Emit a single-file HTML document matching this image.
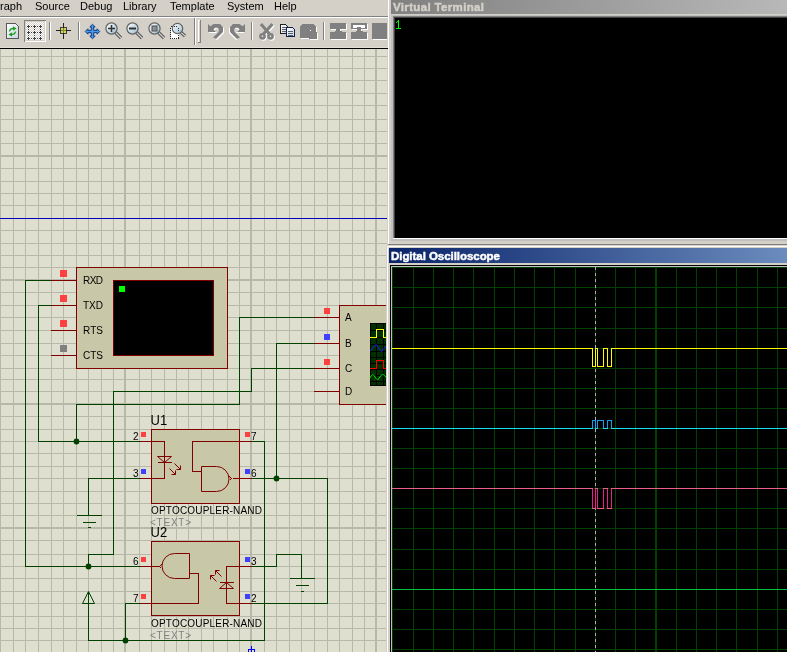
<!DOCTYPE html>
<html><head><meta charset="utf-8"><style>
html,body{margin:0;padding:0;width:787px;height:652px;overflow:hidden;background:#d4d0c8;position:relative;font-family:"Liberation Sans",sans-serif;}
.a{position:absolute;}
.menu{position:absolute;top:0;left:0;width:388px;height:16px;font-size:11px;color:#000;}
.menu span{position:absolute;top:0px;}
svg text{font-family:"Liberation Sans",sans-serif;}
svg{will-change:transform;}
.menu{will-change:transform;}
</style></head><body>
<div class="menu">
<span style="left:0px">raph</span><span style="left:35px">Source</span><span style="left:80px">Debug</span><span style="left:123px">Library</span><span style="left:170px">Template</span><span style="left:227px">System</span><span style="left:274px">Help</span>
</div>
<svg class="a" style="left:0;top:0" width="388" height="652" shape-rendering="crispEdges">
<defs><linearGradient id="lens" x1="0" y1="0" x2="1" y2="1"><stop offset="0" stop-color="#ffffff"/><stop offset="0.7" stop-color="#b8d0e0"/><stop offset="1" stop-color="#90a8b8"/></linearGradient><linearGradient id="doc" x1="0" y1="0" x2="1" y2="1"><stop offset="0" stop-color="#ffffff"/><stop offset="1" stop-color="#c8d4e0"/></linearGradient></defs>
<rect x="0" y="16" width="388" height="1" fill="#808080"/><rect x="0" y="17" width="388" height="1" fill="#ffffff"/><rect x="0" y="47" width="388" height="1" fill="#e2ded8"/><rect x="0" y="48" width="388" height="1" fill="#000000"/>
<rect x="49" y="22" width="1" height="18" fill="#808080"/><rect x="50" y="22" width="1" height="18" fill="#ffffff"/>
<rect x="78" y="22" width="1" height="18" fill="#808080"/><rect x="79" y="22" width="1" height="18" fill="#ffffff"/>
<rect x="194" y="18" width="1" height="27" fill="#808080"/><rect x="195" y="18" width="1" height="27" fill="#ffffff"/>
<rect x="251" y="22" width="1" height="18" fill="#808080"/><rect x="252" y="22" width="1" height="18" fill="#ffffff"/>
<rect x="323" y="22" width="1" height="18" fill="#808080"/><rect x="324" y="22" width="1" height="18" fill="#ffffff"/>
<rect x="198" y="20" width="1" height="23" fill="#ffffff"/><rect x="198" y="20" width="3" height="1" fill="#ffffff"/><rect x="200" y="20" width="1" height="23" fill="#808080"/><rect x="198" y="42" width="3" height="1" fill="#808080"/>
<path d="M6.5,23.5 H15.5 L18.5,26.5 V38.5 H6.5 Z" fill="url(#doc)" stroke="#585858"/><rect x="16" y="25" width="1" height="1" fill="#ffffff"/>
<g shape-rendering="auto"><path d="M9.5,31.5 Q10,28.5 13,28.5" fill="none" stroke="#20a020" stroke-width="1.4"/><polygon points="13,26.3 16.5,28.5 13,30.7" fill="#20a020"/>
<path d="M15.5,31.5 Q15,34.5 12,34.5" fill="none" stroke="#20a020" stroke-width="1.4"/><polygon points="12,32.3 8.5,34.5 12,36.7" fill="#20a020"/></g>
<rect x="24" y="20" width="22" height="22" fill="#ffffff"/><rect x="25" y="21" width="20" height="20" fill="#d4d0c8"/>
<rect x="24" y="20" width="22" height="1" fill="#808080"/><rect x="24" y="20" width="1" height="22" fill="#808080"/>
<rect x="26" y="22" width="1" height="1" fill="#ffffff"/><rect x="28" y="22" width="1" height="1" fill="#ffffff"/><rect x="30" y="22" width="1" height="1" fill="#ffffff"/><rect x="32" y="22" width="1" height="1" fill="#ffffff"/><rect x="34" y="22" width="1" height="1" fill="#ffffff"/><rect x="36" y="22" width="1" height="1" fill="#ffffff"/><rect x="38" y="22" width="1" height="1" fill="#ffffff"/><rect x="40" y="22" width="1" height="1" fill="#ffffff"/><rect x="42" y="22" width="1" height="1" fill="#ffffff"/><rect x="27" y="23" width="1" height="1" fill="#ffffff"/><rect x="29" y="23" width="1" height="1" fill="#ffffff"/><rect x="31" y="23" width="1" height="1" fill="#ffffff"/><rect x="33" y="23" width="1" height="1" fill="#ffffff"/><rect x="35" y="23" width="1" height="1" fill="#ffffff"/><rect x="37" y="23" width="1" height="1" fill="#ffffff"/><rect x="39" y="23" width="1" height="1" fill="#ffffff"/><rect x="41" y="23" width="1" height="1" fill="#ffffff"/><rect x="43" y="23" width="1" height="1" fill="#ffffff"/><rect x="26" y="24" width="1" height="1" fill="#ffffff"/><rect x="28" y="24" width="1" height="1" fill="#ffffff"/><rect x="30" y="24" width="1" height="1" fill="#ffffff"/><rect x="32" y="24" width="1" height="1" fill="#ffffff"/><rect x="34" y="24" width="1" height="1" fill="#ffffff"/><rect x="36" y="24" width="1" height="1" fill="#ffffff"/><rect x="38" y="24" width="1" height="1" fill="#ffffff"/><rect x="40" y="24" width="1" height="1" fill="#ffffff"/><rect x="42" y="24" width="1" height="1" fill="#ffffff"/><rect x="27" y="25" width="1" height="1" fill="#ffffff"/><rect x="29" y="25" width="1" height="1" fill="#ffffff"/><rect x="31" y="25" width="1" height="1" fill="#ffffff"/><rect x="33" y="25" width="1" height="1" fill="#ffffff"/><rect x="35" y="25" width="1" height="1" fill="#ffffff"/><rect x="37" y="25" width="1" height="1" fill="#ffffff"/><rect x="39" y="25" width="1" height="1" fill="#ffffff"/><rect x="41" y="25" width="1" height="1" fill="#ffffff"/><rect x="43" y="25" width="1" height="1" fill="#ffffff"/><rect x="26" y="26" width="1" height="1" fill="#ffffff"/><rect x="28" y="26" width="1" height="1" fill="#ffffff"/><rect x="30" y="26" width="1" height="1" fill="#ffffff"/><rect x="32" y="26" width="1" height="1" fill="#ffffff"/><rect x="34" y="26" width="1" height="1" fill="#ffffff"/><rect x="36" y="26" width="1" height="1" fill="#ffffff"/><rect x="38" y="26" width="1" height="1" fill="#ffffff"/><rect x="40" y="26" width="1" height="1" fill="#ffffff"/><rect x="42" y="26" width="1" height="1" fill="#ffffff"/><rect x="27" y="27" width="1" height="1" fill="#ffffff"/><rect x="29" y="27" width="1" height="1" fill="#ffffff"/><rect x="31" y="27" width="1" height="1" fill="#ffffff"/><rect x="33" y="27" width="1" height="1" fill="#ffffff"/><rect x="35" y="27" width="1" height="1" fill="#ffffff"/><rect x="37" y="27" width="1" height="1" fill="#ffffff"/><rect x="39" y="27" width="1" height="1" fill="#ffffff"/><rect x="41" y="27" width="1" height="1" fill="#ffffff"/><rect x="43" y="27" width="1" height="1" fill="#ffffff"/><rect x="26" y="28" width="1" height="1" fill="#ffffff"/><rect x="28" y="28" width="1" height="1" fill="#ffffff"/><rect x="30" y="28" width="1" height="1" fill="#ffffff"/><rect x="32" y="28" width="1" height="1" fill="#ffffff"/><rect x="34" y="28" width="1" height="1" fill="#ffffff"/><rect x="36" y="28" width="1" height="1" fill="#ffffff"/><rect x="38" y="28" width="1" height="1" fill="#ffffff"/><rect x="40" y="28" width="1" height="1" fill="#ffffff"/><rect x="42" y="28" width="1" height="1" fill="#ffffff"/><rect x="27" y="29" width="1" height="1" fill="#ffffff"/><rect x="29" y="29" width="1" height="1" fill="#ffffff"/><rect x="31" y="29" width="1" height="1" fill="#ffffff"/><rect x="33" y="29" width="1" height="1" fill="#ffffff"/><rect x="35" y="29" width="1" height="1" fill="#ffffff"/><rect x="37" y="29" width="1" height="1" fill="#ffffff"/><rect x="39" y="29" width="1" height="1" fill="#ffffff"/><rect x="41" y="29" width="1" height="1" fill="#ffffff"/><rect x="43" y="29" width="1" height="1" fill="#ffffff"/><rect x="26" y="30" width="1" height="1" fill="#ffffff"/><rect x="28" y="30" width="1" height="1" fill="#ffffff"/><rect x="30" y="30" width="1" height="1" fill="#ffffff"/><rect x="32" y="30" width="1" height="1" fill="#ffffff"/><rect x="34" y="30" width="1" height="1" fill="#ffffff"/><rect x="36" y="30" width="1" height="1" fill="#ffffff"/><rect x="38" y="30" width="1" height="1" fill="#ffffff"/><rect x="40" y="30" width="1" height="1" fill="#ffffff"/><rect x="42" y="30" width="1" height="1" fill="#ffffff"/><rect x="27" y="31" width="1" height="1" fill="#ffffff"/><rect x="29" y="31" width="1" height="1" fill="#ffffff"/><rect x="31" y="31" width="1" height="1" fill="#ffffff"/><rect x="33" y="31" width="1" height="1" fill="#ffffff"/><rect x="35" y="31" width="1" height="1" fill="#ffffff"/><rect x="37" y="31" width="1" height="1" fill="#ffffff"/><rect x="39" y="31" width="1" height="1" fill="#ffffff"/><rect x="41" y="31" width="1" height="1" fill="#ffffff"/><rect x="43" y="31" width="1" height="1" fill="#ffffff"/><rect x="26" y="32" width="1" height="1" fill="#ffffff"/><rect x="28" y="32" width="1" height="1" fill="#ffffff"/><rect x="30" y="32" width="1" height="1" fill="#ffffff"/><rect x="32" y="32" width="1" height="1" fill="#ffffff"/><rect x="34" y="32" width="1" height="1" fill="#ffffff"/><rect x="36" y="32" width="1" height="1" fill="#ffffff"/><rect x="38" y="32" width="1" height="1" fill="#ffffff"/><rect x="40" y="32" width="1" height="1" fill="#ffffff"/><rect x="42" y="32" width="1" height="1" fill="#ffffff"/><rect x="27" y="33" width="1" height="1" fill="#ffffff"/><rect x="29" y="33" width="1" height="1" fill="#ffffff"/><rect x="31" y="33" width="1" height="1" fill="#ffffff"/><rect x="33" y="33" width="1" height="1" fill="#ffffff"/><rect x="35" y="33" width="1" height="1" fill="#ffffff"/><rect x="37" y="33" width="1" height="1" fill="#ffffff"/><rect x="39" y="33" width="1" height="1" fill="#ffffff"/><rect x="41" y="33" width="1" height="1" fill="#ffffff"/><rect x="43" y="33" width="1" height="1" fill="#ffffff"/><rect x="26" y="34" width="1" height="1" fill="#ffffff"/><rect x="28" y="34" width="1" height="1" fill="#ffffff"/><rect x="30" y="34" width="1" height="1" fill="#ffffff"/><rect x="32" y="34" width="1" height="1" fill="#ffffff"/><rect x="34" y="34" width="1" height="1" fill="#ffffff"/><rect x="36" y="34" width="1" height="1" fill="#ffffff"/><rect x="38" y="34" width="1" height="1" fill="#ffffff"/><rect x="40" y="34" width="1" height="1" fill="#ffffff"/><rect x="42" y="34" width="1" height="1" fill="#ffffff"/><rect x="27" y="35" width="1" height="1" fill="#ffffff"/><rect x="29" y="35" width="1" height="1" fill="#ffffff"/><rect x="31" y="35" width="1" height="1" fill="#ffffff"/><rect x="33" y="35" width="1" height="1" fill="#ffffff"/><rect x="35" y="35" width="1" height="1" fill="#ffffff"/><rect x="37" y="35" width="1" height="1" fill="#ffffff"/><rect x="39" y="35" width="1" height="1" fill="#ffffff"/><rect x="41" y="35" width="1" height="1" fill="#ffffff"/><rect x="43" y="35" width="1" height="1" fill="#ffffff"/><rect x="26" y="36" width="1" height="1" fill="#ffffff"/><rect x="28" y="36" width="1" height="1" fill="#ffffff"/><rect x="30" y="36" width="1" height="1" fill="#ffffff"/><rect x="32" y="36" width="1" height="1" fill="#ffffff"/><rect x="34" y="36" width="1" height="1" fill="#ffffff"/><rect x="36" y="36" width="1" height="1" fill="#ffffff"/><rect x="38" y="36" width="1" height="1" fill="#ffffff"/><rect x="40" y="36" width="1" height="1" fill="#ffffff"/><rect x="42" y="36" width="1" height="1" fill="#ffffff"/><rect x="27" y="37" width="1" height="1" fill="#ffffff"/><rect x="29" y="37" width="1" height="1" fill="#ffffff"/><rect x="31" y="37" width="1" height="1" fill="#ffffff"/><rect x="33" y="37" width="1" height="1" fill="#ffffff"/><rect x="35" y="37" width="1" height="1" fill="#ffffff"/><rect x="37" y="37" width="1" height="1" fill="#ffffff"/><rect x="39" y="37" width="1" height="1" fill="#ffffff"/><rect x="41" y="37" width="1" height="1" fill="#ffffff"/><rect x="43" y="37" width="1" height="1" fill="#ffffff"/><rect x="26" y="38" width="1" height="1" fill="#ffffff"/><rect x="28" y="38" width="1" height="1" fill="#ffffff"/><rect x="30" y="38" width="1" height="1" fill="#ffffff"/><rect x="32" y="38" width="1" height="1" fill="#ffffff"/><rect x="34" y="38" width="1" height="1" fill="#ffffff"/><rect x="36" y="38" width="1" height="1" fill="#ffffff"/><rect x="38" y="38" width="1" height="1" fill="#ffffff"/><rect x="40" y="38" width="1" height="1" fill="#ffffff"/><rect x="42" y="38" width="1" height="1" fill="#ffffff"/><rect x="27" y="39" width="1" height="1" fill="#ffffff"/><rect x="29" y="39" width="1" height="1" fill="#ffffff"/><rect x="31" y="39" width="1" height="1" fill="#ffffff"/><rect x="33" y="39" width="1" height="1" fill="#ffffff"/><rect x="35" y="39" width="1" height="1" fill="#ffffff"/><rect x="37" y="39" width="1" height="1" fill="#ffffff"/><rect x="39" y="39" width="1" height="1" fill="#ffffff"/><rect x="41" y="39" width="1" height="1" fill="#ffffff"/><rect x="43" y="39" width="1" height="1" fill="#ffffff"/>
<rect x="27" y="26" width="3" height="1" fill="#404040"/><rect x="28" y="25" width="1" height="3" fill="#404040"/>
<rect x="27" y="32" width="3" height="1" fill="#404040"/><rect x="28" y="31" width="1" height="3" fill="#404040"/>
<rect x="27" y="38" width="3" height="1" fill="#404040"/><rect x="28" y="37" width="1" height="3" fill="#404040"/>
<rect x="33" y="26" width="3" height="1" fill="#404040"/><rect x="34" y="25" width="1" height="3" fill="#404040"/>
<rect x="33" y="32" width="3" height="1" fill="#404040"/><rect x="34" y="31" width="1" height="3" fill="#404040"/>
<rect x="33" y="38" width="3" height="1" fill="#404040"/><rect x="34" y="37" width="1" height="3" fill="#404040"/>
<rect x="39" y="26" width="3" height="1" fill="#404040"/><rect x="40" y="25" width="1" height="3" fill="#404040"/>
<rect x="39" y="32" width="3" height="1" fill="#404040"/><rect x="40" y="31" width="1" height="3" fill="#404040"/>
<rect x="39" y="38" width="3" height="1" fill="#404040"/><rect x="40" y="37" width="1" height="3" fill="#404040"/>
<rect x="31" y="26" width="1" height="1" fill="#404040"/>
<rect x="31" y="32" width="1" height="1" fill="#404040"/>
<rect x="31" y="38" width="1" height="1" fill="#404040"/>
<rect x="37" y="26" width="1" height="1" fill="#404040"/>
<rect x="37" y="32" width="1" height="1" fill="#404040"/>
<rect x="37" y="38" width="1" height="1" fill="#404040"/>
<rect x="28" y="29" width="1" height="1" fill="#404040"/>
<rect x="28" y="35" width="1" height="1" fill="#404040"/>
<rect x="34" y="29" width="1" height="1" fill="#404040"/>
<rect x="34" y="35" width="1" height="1" fill="#404040"/>
<rect x="40" y="29" width="1" height="1" fill="#404040"/>
<rect x="40" y="35" width="1" height="1" fill="#404040"/>
<rect x="60.5" y="27.5" width="6" height="6" fill="#d8d850" stroke="#404040"/>
<rect x="56" y="30" width="15" height="1" fill="#202020"/><rect x="63" y="23" width="1" height="16" fill="#202020"/>
<rect x="61" y="30" width="5" height="1" fill="#808040"/><rect x="63" y="28" width="1" height="5" fill="#808040"/>
<polygon points="92.5,24.3 95.2,26.9 93.7,26.9 93.7,30.3 97.1,30.3 97.1,28.8 99.7,31.5 97.1,34.2 97.1,32.7 93.7,32.7 93.7,36.1 95.2,36.1 92.5,38.7 89.8,36.1 91.3,36.1 91.3,32.7 87.9,32.7 87.9,34.2 85.3,31.5 87.9,28.8 87.9,30.3 91.3,30.3 91.3,26.9 89.8,26.9" fill="#4a98e8" stroke="#0a3a80" stroke-width="1" stroke-linejoin="miter" shape-rendering="auto"/>
<g shape-rendering="auto"><line x1="115.5" y1="32.5" x2="121.0" y2="38" stroke="#505050" stroke-width="3.2"/><line x1="115.5" y1="32.5" x2="121.0" y2="38" stroke="#d0d0d0" stroke-width="1.2"/><circle cx="111.5" cy="28.5" r="5.6" fill="url(#lens)" stroke="#606060" stroke-width="1.2"/><path d="M108,28.5 H115 M111.5,25 V32" stroke="#303030" stroke-width="1.5"/></g>
<g shape-rendering="auto"><line x1="136.5" y1="32.5" x2="142.0" y2="38" stroke="#505050" stroke-width="3.2"/><line x1="136.5" y1="32.5" x2="142.0" y2="38" stroke="#d0d0d0" stroke-width="1.2"/><circle cx="132.5" cy="28.5" r="5.6" fill="url(#lens)" stroke="#606060" stroke-width="1.2"/><path d="M129,28.5 H136" stroke="#303030" stroke-width="2"/></g>
<g shape-rendering="auto"><line x1="158.5" y1="32.5" x2="164.0" y2="38" stroke="#505050" stroke-width="3.2"/><line x1="158.5" y1="32.5" x2="164.0" y2="38" stroke="#d0d0d0" stroke-width="1.2"/><circle cx="154.5" cy="28.5" r="5.6" fill="url(#lens)" stroke="#606060" stroke-width="1.2"/><rect x="152" y="26" width="5" height="5" fill="#909090" stroke="#505050"/></g>
<rect x="170.5" y="26.5" width="8" height="12" fill="#ffffff" stroke="#202020" stroke-dasharray="1,1"/>
<g shape-rendering="auto"><line x1="181" y1="32.5" x2="185" y2="36" stroke="#505050" stroke-width="3.2"/><line x1="181" y1="32.5" x2="185" y2="36" stroke="#d0d0d0" stroke-width="1.2"/><circle cx="177.5" cy="28.5" r="5.2" fill="url(#lens)" stroke="#606060" stroke-width="1.2"/></g>
<rect x="174" y="26" width="1" height="1" fill="#303030"/><rect x="176" y="26" width="1" height="1" fill="#303030"/><rect x="178" y="28" width="1" height="1" fill="#303030"/><rect x="178" y="30" width="1" height="1" fill="#303030"/>
<g shape-rendering="auto"><g transform="translate(1,1)"><polygon points="208,24 210.5,26.3 213.5,24 220,24 223,27 223,32 216,39 213,37.5 218.5,32 219,29.5 217.5,27.8 215,27.8 213.5,29.5 216,32 208,32" fill="#ffffff"/></g><polygon points="208,24 210.5,26.3 213.5,24 220,24 223,27 223,32 216,39 213,37.5 218.5,32 219,29.5 217.5,27.8 215,27.8 213.5,29.5 216,32 208,32" fill="#808080"/><g transform="translate(453,0) scale(-1,1)"><g transform="translate(1,1)"><polygon points="208,24 210.5,26.3 213.5,24 220,24 223,27 223,32 216,39 213,37.5 218.5,32 219,29.5 217.5,27.8 215,27.8 213.5,29.5 216,32 208,32" fill="#ffffff"/></g><polygon points="208,24 210.5,26.3 213.5,24 220,24 223,27 223,32 216,39 213,37.5 218.5,32 219,29.5 217.5,27.8 215,27.8 213.5,29.5 216,32 208,32" fill="#808080"/></g></g>
<g shape-rendering="auto"><g transform="translate(1,1)"><g fill="none" stroke="#ffffff"><line x1="261" y1="24" x2="270" y2="34.5" stroke-width="3.2"/><line x1="272.5" y1="24" x2="263" y2="34.5" stroke-width="3.2"/><circle cx="262.5" cy="36.3" r="2.1" stroke-width="2.6"/><circle cx="270.5" cy="36.3" r="2.1" stroke-width="2.6"/></g></g><g fill="none" stroke="#808080"><line x1="261" y1="24" x2="270" y2="34.5" stroke-width="3.2"/><line x1="272.5" y1="24" x2="263" y2="34.5" stroke-width="3.2"/><circle cx="262.5" cy="36.3" r="2.1" stroke-width="2.6"/><circle cx="270.5" cy="36.3" r="2.1" stroke-width="2.6"/></g></g>
<path d="M280.5,24.5 H285.5 L287.5,26.5 V33.5 H280.5 Z" fill="url(#doc)" stroke="#202020"/>
<rect x="282" y="27" width="4" height="1" fill="#606060"/><rect x="282" y="29" width="4" height="1" fill="#606060"/><rect x="282" y="31" width="4" height="1" fill="#606060"/>
<path d="M286.5,27.5 H292.5 L294.5,29.5 V36.5 H286.5 Z" fill="url(#doc)" stroke="#102050"/>
<rect x="288" y="31" width="5" height="1" fill="#506070"/><rect x="288" y="33" width="5" height="1" fill="#506070"/><rect x="288" y="35" width="5" height="1" fill="#506070"/>
<g transform="translate(1,1)"><path d="M300,26 L304,23.5 H313 L316,26 V32 L317,33 V39 H309 V38 H300 Z" fill="#ffffff"/></g><path d="M300,26 L304,23.5 H313 L316,26 V32 L317,33 V39 H309 V38 H300 Z" fill="#808080"/>
<rect x="310" y="30" width="1" height="1" fill="#ffffff"/>
<g transform="translate(1,1)"><path d="M330,23 H346 V29 H340 V31 L343,32 H346 V39 H330 V32 H333 L336,31 V29 H330 Z" fill="#ffffff"/></g><path d="M330,23 H346 V29 H340 V31 L343,32 H346 V39 H330 V32 H333 L336,31 V29 H330 Z" fill="#808080"/>
<g transform="translate(1,1)"><path d="M351,23 H367 V29 H361 V31 L364,32 H367 V39 H351 V32 H354 L357,31 V29 H351 Z" fill="#ffffff"/></g><path d="M351,23 H367 V29 H361 V31 L364,32 H367 V39 H351 V32 H354 L357,31 V29 H351 Z" fill="#808080"/>
<rect x="353" y="25" width="12" height="3" fill="#ffffff"/><rect x="357" y="27" width="4" height="2" fill="#808080"/>
<rect x="373" y="24" width="14" height="16" fill="#ffffff"/><rect x="372" y="23" width="15" height="16" fill="#808080"/>
<rect x="0" y="49" width="388" height="603" fill="#dfdfd0"/>
<rect x="0" y="49" width="1" height="603" fill="#b8b8a8"/>
<rect x="13" y="49" width="1" height="603" fill="#b8b8a8"/>
<rect x="25" y="49" width="1" height="603" fill="#b8b8a8"/>
<rect x="38" y="49" width="1" height="603" fill="#b8b8a8"/>
<rect x="51" y="49" width="1" height="603" fill="#b8b8a8"/>
<rect x="63" y="49" width="1" height="603" fill="#b8b8a8"/>
<rect x="76" y="49" width="1" height="603" fill="#b8b8a8"/>
<rect x="88" y="49" width="1" height="603" fill="#b8b8a8"/>
<rect x="101" y="49" width="1" height="603" fill="#b8b8a8"/>
<rect x="113" y="49" width="1" height="603" fill="#b8b8a8"/>
<rect x="124" y="49" width="2" height="603" fill="#b8b8a8"/>
<rect x="139" y="49" width="1" height="603" fill="#b8b8a8"/>
<rect x="151" y="49" width="1" height="603" fill="#b8b8a8"/>
<rect x="164" y="49" width="1" height="603" fill="#b8b8a8"/>
<rect x="176" y="49" width="1" height="603" fill="#b8b8a8"/>
<rect x="188" y="49" width="1" height="603" fill="#b8b8a8"/>
<rect x="201" y="49" width="1" height="603" fill="#b8b8a8"/>
<rect x="213" y="49" width="1" height="603" fill="#b8b8a8"/>
<rect x="227" y="49" width="1" height="603" fill="#b8b8a8"/>
<rect x="239" y="49" width="1" height="603" fill="#b8b8a8"/>
<rect x="250" y="49" width="2" height="603" fill="#b8b8a8"/>
<rect x="264" y="49" width="1" height="603" fill="#b8b8a8"/>
<rect x="276" y="49" width="1" height="603" fill="#b8b8a8"/>
<rect x="289" y="49" width="1" height="603" fill="#b8b8a8"/>
<rect x="301" y="49" width="1" height="603" fill="#b8b8a8"/>
<rect x="314" y="49" width="1" height="603" fill="#b8b8a8"/>
<rect x="327" y="49" width="1" height="603" fill="#b8b8a8"/>
<rect x="339" y="49" width="1" height="603" fill="#b8b8a8"/>
<rect x="352" y="49" width="1" height="603" fill="#b8b8a8"/>
<rect x="364" y="49" width="1" height="603" fill="#b8b8a8"/>
<rect x="375" y="49" width="2" height="603" fill="#b8b8a8"/>
<rect x="0" y="56" width="388" height="1" fill="#b8b8a8"/>
<rect x="0" y="68" width="388" height="1" fill="#b8b8a8"/>
<rect x="0" y="80" width="388" height="1" fill="#b8b8a8"/>
<rect x="0" y="93" width="388" height="1" fill="#b8b8a8"/>
<rect x="0" y="105" width="388" height="1" fill="#b8b8a8"/>
<rect x="0" y="119" width="388" height="1" fill="#b8b8a8"/>
<rect x="0" y="131" width="388" height="1" fill="#b8b8a8"/>
<rect x="0" y="143" width="388" height="1" fill="#b8b8a8"/>
<rect x="0" y="155" width="388" height="2" fill="#b8b8a8"/>
<rect x="0" y="168" width="388" height="1" fill="#b8b8a8"/>
<rect x="0" y="181" width="388" height="1" fill="#b8b8a8"/>
<rect x="0" y="193" width="388" height="1" fill="#b8b8a8"/>
<rect x="0" y="205" width="388" height="1" fill="#b8b8a8"/>
<rect x="0" y="218" width="388" height="1" fill="#b8b8a8"/>
<rect x="0" y="230" width="388" height="1" fill="#b8b8a8"/>
<rect x="0" y="243" width="388" height="1" fill="#b8b8a8"/>
<rect x="0" y="255" width="388" height="1" fill="#b8b8a8"/>
<rect x="0" y="267" width="388" height="1" fill="#b8b8a8"/>
<rect x="0" y="279" width="388" height="2" fill="#b8b8a8"/>
<rect x="0" y="292" width="388" height="1" fill="#b8b8a8"/>
<rect x="0" y="305" width="388" height="1" fill="#b8b8a8"/>
<rect x="0" y="317" width="388" height="1" fill="#b8b8a8"/>
<rect x="0" y="330" width="388" height="1" fill="#b8b8a8"/>
<rect x="0" y="343" width="388" height="1" fill="#b8b8a8"/>
<rect x="0" y="355" width="388" height="1" fill="#b8b8a8"/>
<rect x="0" y="368" width="388" height="1" fill="#b8b8a8"/>
<rect x="0" y="379" width="388" height="1" fill="#b8b8a8"/>
<rect x="0" y="391" width="388" height="1" fill="#b8b8a8"/>
<rect x="0" y="403" width="388" height="2" fill="#b8b8a8"/>
<rect x="0" y="416" width="388" height="1" fill="#b8b8a8"/>
<rect x="0" y="429" width="388" height="1" fill="#b8b8a8"/>
<rect x="0" y="441" width="388" height="1" fill="#b8b8a8"/>
<rect x="0" y="453" width="388" height="1" fill="#b8b8a8"/>
<rect x="0" y="466" width="388" height="1" fill="#b8b8a8"/>
<rect x="0" y="478" width="388" height="1" fill="#b8b8a8"/>
<rect x="0" y="491" width="388" height="1" fill="#b8b8a8"/>
<rect x="0" y="503" width="388" height="1" fill="#b8b8a8"/>
<rect x="0" y="515" width="388" height="1" fill="#b8b8a8"/>
<rect x="0" y="527" width="388" height="2" fill="#b8b8a8"/>
<rect x="0" y="540" width="388" height="1" fill="#b8b8a8"/>
<rect x="0" y="554" width="388" height="1" fill="#b8b8a8"/>
<rect x="0" y="566" width="388" height="1" fill="#b8b8a8"/>
<rect x="0" y="578" width="388" height="1" fill="#b8b8a8"/>
<rect x="0" y="591" width="388" height="1" fill="#b8b8a8"/>
<rect x="0" y="603" width="388" height="1" fill="#b8b8a8"/>
<rect x="0" y="616" width="388" height="1" fill="#b8b8a8"/>
<rect x="0" y="628" width="388" height="1" fill="#b8b8a8"/>
<rect x="0" y="640" width="388" height="1" fill="#b8b8a8"/>
<rect x="0" y="218" width="388" height="1" fill="#0000c0"/>
<polyline fill="none" stroke="#004000" stroke-width="1" points="51.5,280.5 25.5,280.5 25.5,566.5 139.5,566.5"/>
<polyline fill="none" stroke="#004000" stroke-width="1" points="51.5,305.5 38.5,305.5 38.5,441.5 139.5,441.5"/>
<polyline fill="none" stroke="#004000" stroke-width="1" points="76.5,441.5 76.5,404.5 239.5,404.5 239.5,317.5 314.5,317.5"/>
<polyline fill="none" stroke="#004000" stroke-width="1" points="113.5,554.5 113.5,391.5 251.5,391.5 251.5,368.5 314.5,368.5"/>
<polyline fill="none" stroke="#004000" stroke-width="1" points="276.5,478.5 276.5,343.5 314.5,343.5"/>
<polyline fill="none" stroke="#004000" stroke-width="1" points="88.5,566.5 88.5,554.5 113.5,554.5"/>
<polyline fill="none" stroke="#004000" stroke-width="1" points="139.5,478.5 88.5,478.5 88.5,515.5"/>
<polyline fill="none" stroke="#004000" stroke-width="1" points="76.5,515.5 101.5,515.5"/>
<polyline fill="none" stroke="#004000" stroke-width="1" points="82.5,522.5 95.5,522.5"/>
<polyline fill="none" stroke="#004000" stroke-width="1" points="87.5,527.5 90.5,527.5"/>
<polyline fill="none" stroke="#004000" stroke-width="1" points="251.5,441.5 264.5,441.5 264.5,640.5 88.5,640.5 88.5,591.5"/>
<polyline fill="none" stroke="#004000" stroke-width="1" points="251.5,478.5 327.5,478.5 327.5,603.5 251.5,603.5"/>
<polyline fill="none" stroke="#004000" stroke-width="1" points="251.5,566.5 276.5,566.5 276.5,554.5 301.5,554.5 301.5,578.5"/>
<polyline fill="none" stroke="#004000" stroke-width="1" points="289.5,578.5 314.5,578.5"/>
<polyline fill="none" stroke="#004000" stroke-width="1" points="295.5,585.5 308.5,585.5"/>
<polyline fill="none" stroke="#004000" stroke-width="1" points="300.5,591.5 303.5,591.5"/>
<polyline fill="none" stroke="#004000" stroke-width="1" points="125.5,640.5 125.5,603.5 139.5,603.5"/>
<polygon fill="none" stroke="#004000" points="82.5,603.5 88.5,591.5 94.5,603.5" shape-rendering="auto"/>
<circle cx="76.5" cy="441.5" r="2.9" fill="#004000" shape-rendering="auto"/>
<circle cx="276.5" cy="478.5" r="2.9" fill="#004000" shape-rendering="auto"/>
<circle cx="88.5" cy="566.5" r="2.9" fill="#004000" shape-rendering="auto"/>
<circle cx="125.5" cy="640.5" r="2.9" fill="#004000" shape-rendering="auto"/>
<rect x="251" y="646" width="1" height="7" fill="#0000ff"/>
<path d="M248.5,652 V649.5 H254.5 V652" fill="none" stroke="#0000ff"/>
<rect x="76.5" y="267.5" width="151" height="101" fill="#c8c8a8" stroke="#800000"/>
<rect x="113.5" y="280.5" width="100" height="75" fill="#000" stroke="#800000"/>
<rect x="119" y="286" width="6" height="6" fill="#00ff00"/>
<rect x="51" y="280" width="26" height="1" fill="#800000"/>
<rect x="60" y="270" width="7" height="7" fill="#ff4040"/>
<rect x="51" y="305" width="26" height="1" fill="#800000"/>
<rect x="60" y="295" width="7" height="7" fill="#ff4040"/>
<rect x="51" y="330" width="26" height="1" fill="#800000"/>
<rect x="60" y="320" width="7" height="7" fill="#ff4040"/>
<rect x="51" y="355" width="26" height="1" fill="#800000"/>
<rect x="60" y="345" width="7" height="7" fill="#808080"/>
<rect x="339.5" y="305.5" width="60" height="99" fill="#c8c8a8" stroke="#800000"/>
<rect x="314" y="317" width="26" height="1" fill="#800000"/>
<rect x="324" y="308" width="6" height="6" fill="#ff4040"/>
<rect x="314" y="343" width="26" height="1" fill="#800000"/>
<rect x="324" y="334" width="6" height="6" fill="#4040ff"/>
<rect x="314" y="368" width="26" height="1" fill="#800000"/>
<rect x="324" y="359" width="6" height="6" fill="#ff4040"/>
<rect x="314" y="391" width="26" height="1" fill="#800000"/>
<rect x="370" y="323" width="17" height="63" fill="#000"/>
<rect x="371" y="324" width="5" height="6" fill="#003000"/>
<rect x="377" y="324" width="6" height="6" fill="#003000"/>
<rect x="384" y="324" width="3" height="6" fill="#003000"/>
<rect x="371" y="331" width="5" height="6" fill="#003000"/>
<rect x="377" y="331" width="6" height="6" fill="#003000"/>
<rect x="384" y="331" width="3" height="6" fill="#003000"/>
<rect x="371" y="338" width="5" height="6" fill="#003000"/>
<rect x="377" y="338" width="6" height="6" fill="#003000"/>
<rect x="384" y="338" width="3" height="6" fill="#003000"/>
<rect x="371" y="345" width="5" height="6" fill="#003000"/>
<rect x="377" y="345" width="6" height="6" fill="#003000"/>
<rect x="384" y="345" width="3" height="6" fill="#003000"/>
<rect x="371" y="352" width="5" height="5" fill="#003000"/>
<rect x="377" y="352" width="6" height="5" fill="#003000"/>
<rect x="384" y="352" width="3" height="5" fill="#003000"/>
<rect x="371" y="358" width="5" height="5" fill="#003000"/>
<rect x="377" y="358" width="6" height="5" fill="#003000"/>
<rect x="384" y="358" width="3" height="5" fill="#003000"/>
<rect x="371" y="364" width="5" height="5" fill="#003000"/>
<rect x="377" y="364" width="6" height="5" fill="#003000"/>
<rect x="384" y="364" width="3" height="5" fill="#003000"/>
<rect x="371" y="370" width="5" height="5" fill="#003000"/>
<rect x="377" y="370" width="6" height="5" fill="#003000"/>
<rect x="384" y="370" width="3" height="5" fill="#003000"/>
<rect x="371" y="376" width="5" height="5" fill="#003000"/>
<rect x="377" y="376" width="6" height="5" fill="#003000"/>
<rect x="384" y="376" width="3" height="5" fill="#003000"/>
<rect x="371" y="382" width="5" height="3" fill="#003000"/>
<rect x="377" y="382" width="6" height="3" fill="#003000"/>
<rect x="384" y="382" width="3" height="3" fill="#003000"/>
<polyline fill="none" stroke="#ffff00" points="370,337.5 376.5,337.5 376.5,329.5 383.5,329.5 383.5,337.5 388,337.5"/>
<polyline fill="none" stroke="#2020ff" points="370,351 376,344.5 381.5,351.5 387,345" shape-rendering="auto"/>
<polyline fill="none" stroke="#ff0000" points="370,368.5 376.5,368.5 376.5,360.5 383.5,360.5 383.5,368.5 388,368.5"/>
<path fill="none" stroke="#00e000" d="M370,378 Q372.5,372 375,377 Q377.5,382 380,377 Q382.5,372 386,377" shape-rendering="auto"/>
<rect x="151.5" y="429.5" width="88" height="74" fill="#c8c8a8" stroke="#800000"/>
<polyline fill="none" stroke="#800000" stroke-width="1" points="139.5,441.5 164.5,441.5 164.5,478.5 139.5,478.5"/>
<polyline fill="none" stroke="#800000" stroke-width="1" points="251.5,441.5 192.5,441.5 192.5,471.5 201.5,471.5"/>
<polyline fill="none" stroke="#800000" stroke-width="1" points="232.5,478.5 251.5,478.5"/>
<polygon fill="none" stroke="#800000" points="157.5,456.5 171.5,456.5 164.5,462.5" shape-rendering="auto"/>
<polyline fill="none" stroke="#800000" stroke-width="1" points="157.5,462.5 171.5,462.5"/>
<g shape-rendering="auto"><polyline fill="none" stroke="#800000" stroke-width="1" points="174.5,463.5 180.5,469.5"/><polyline fill="none" stroke="#800000" stroke-width="1" points="176.5,469.5 180.5,469.5 180.5,465.5"/>
<polyline fill="none" stroke="#800000" stroke-width="1" points="169.5,468.5 175.5,474.5"/><polyline fill="none" stroke="#800000" stroke-width="1" points="171.5,474.5 175.5,474.5 175.5,470.5"/></g>
<path fill="none" stroke="#800000" shape-rendering="auto" d="M216.5,466.5 H201.5 V491.5 H216.5 A12.5,12.5 0 0 0 216.5,466.5"/>
<polyline fill="none" stroke="#800000" stroke-width="1" points="229.5,476.5 231.5,478.5 229.5,480.5"/>
<g transform="translate(0,112)"><g transform="rotate(180 195.5 466.5)"><rect x="151.5" y="429.5" width="88" height="74" fill="#c8c8a8" stroke="#800000"/>
<polyline fill="none" stroke="#800000" stroke-width="1" points="139.5,441.5 164.5,441.5 164.5,478.5 139.5,478.5"/>
<polyline fill="none" stroke="#800000" stroke-width="1" points="251.5,441.5 192.5,441.5 192.5,471.5 201.5,471.5"/>
<polyline fill="none" stroke="#800000" stroke-width="1" points="232.5,478.5 251.5,478.5"/>
<polygon fill="none" stroke="#800000" points="157.5,456.5 171.5,456.5 164.5,462.5" shape-rendering="auto"/>
<polyline fill="none" stroke="#800000" stroke-width="1" points="157.5,462.5 171.5,462.5"/>
<g shape-rendering="auto"><polyline fill="none" stroke="#800000" stroke-width="1" points="174.5,463.5 180.5,469.5"/><polyline fill="none" stroke="#800000" stroke-width="1" points="176.5,469.5 180.5,469.5 180.5,465.5"/>
<polyline fill="none" stroke="#800000" stroke-width="1" points="169.5,468.5 175.5,474.5"/><polyline fill="none" stroke="#800000" stroke-width="1" points="171.5,474.5 175.5,474.5 175.5,470.5"/></g>
<path fill="none" stroke="#800000" shape-rendering="auto" d="M216.5,466.5 H201.5 V491.5 H216.5 A12.5,12.5 0 0 0 216.5,466.5"/>
<polyline fill="none" stroke="#800000" stroke-width="1" points="229.5,476.5 231.5,478.5 229.5,480.5"/></g></g>
<rect x="141" y="432" width="5" height="5" fill="#ff4040"/>
<rect x="141" y="469" width="5" height="5" fill="#4040ff"/>
<rect x="245" y="432" width="5" height="5" fill="#ff4040"/>
<rect x="245" y="469" width="5" height="5" fill="#4040ff"/>
<rect x="141" y="557" width="5" height="5" fill="#ff4040"/>
<rect x="141" y="594" width="5" height="5" fill="#ff4040"/>
<rect x="245" y="557" width="5" height="5" fill="#4040ff"/>
<rect x="245" y="594" width="5" height="5" fill="#4040ff"/>
<rect x="387" y="49" width="1" height="603" fill="#d4d0c8"/>
<text x="83" y="284" font-size="10" fill="#000" font-weight="normal" textLength="20" lengthAdjust="spacing">RXD</text>
<text x="83" y="309" font-size="10" fill="#000" font-weight="normal" textLength="20" lengthAdjust="spacing">TXD</text>
<text x="83" y="334" font-size="10" fill="#000" font-weight="normal" textLength="20" lengthAdjust="spacing">RTS</text>
<text x="83" y="359" font-size="10" fill="#000" font-weight="normal" textLength="20" lengthAdjust="spacing">CTS</text>
<text x="345" y="321" font-size="10" fill="#000" font-weight="normal" textLength="7" lengthAdjust="spacing">A</text>
<text x="345" y="347" font-size="10" fill="#000" font-weight="normal" textLength="7" lengthAdjust="spacing">B</text>
<text x="345" y="372" font-size="10" fill="#000" font-weight="normal" textLength="7" lengthAdjust="spacing">C</text>
<text x="345" y="395" font-size="10" fill="#000" font-weight="normal" textLength="7" lengthAdjust="spacing">D</text>
<text transform="translate(150.5,425) scale(0.84,1)" font-size="15.5" fill="#000">U1</text>
<text transform="translate(150.5,537) scale(0.84,1)" font-size="15.5" fill="#000">U2</text>
<text x="151" y="514" font-size="10" fill="#000" font-weight="normal" textLength="111" lengthAdjust="spacing">OPTOCOUPLER-NAND</text>
<text x="151" y="627" font-size="10" fill="#000" font-weight="normal" textLength="111" lengthAdjust="spacing">OPTOCOUPLER-NAND</text>
<text x="150" y="526" font-size="10" fill="#808080" font-weight="normal" textLength="41" lengthAdjust="spacing">&lt;TEXT&gt;</text>
<text x="150" y="639" font-size="10" fill="#808080" font-weight="normal" textLength="41" lengthAdjust="spacing">&lt;TEXT&gt;</text>
<text x="133" y="440" font-size="10" fill="#000" font-weight="normal" textLength="6" lengthAdjust="spacing">2</text>
<text x="133" y="477" font-size="10" fill="#000" font-weight="normal" textLength="6" lengthAdjust="spacing">3</text>
<text x="251" y="440" font-size="10" fill="#000" font-weight="normal" textLength="6" lengthAdjust="spacing">7</text>
<text x="251" y="477" font-size="10" fill="#000" font-weight="normal" textLength="6" lengthAdjust="spacing">6</text>
<text x="133" y="565" font-size="10" fill="#000" font-weight="normal" textLength="6" lengthAdjust="spacing">6</text>
<text x="133" y="602" font-size="10" fill="#000" font-weight="normal" textLength="6" lengthAdjust="spacing">7</text>
<text x="251" y="565" font-size="10" fill="#000" font-weight="normal" textLength="6" lengthAdjust="spacing">3</text>
<text x="251" y="602" font-size="10" fill="#000" font-weight="normal" textLength="6" lengthAdjust="spacing">2</text>
</svg>
<!-- windows -->
<div class="a" style="left:388px;top:0;width:1px;height:244px;background:#fff"></div>
<div class="a" style="left:389px;top:0;width:398px;height:246px;background:#d4d0c8"></div>
<div class="a" style="left:391px;top:0;width:396px;height:14px;background:linear-gradient(90deg,#808080,#b8b8b8)"></div>
<div class="a" style="left:391px;top:15px;width:396px;height:226px;background:#c0c0c0"></div>
<div class="a" style="left:393px;top:16px;width:394px;height:222px;background:#808080"></div>
<div class="a" style="left:394px;top:17px;width:393px;height:221px;background:#404040"></div>
<div class="a" style="left:395px;top:18px;width:392px;height:220px;background:#000"></div>
<div class="a" style="left:393px;top:238px;width:394px;height:1px;background:#fff"></div>
<div class="a" style="left:388px;top:244px;width:399px;height:1px;background:#808080"></div>
<div class="a" style="left:386px;top:245px;width:401px;height:407px;background:#d4d0c8"></div>
<div class="a" style="left:387px;top:246px;width:400px;height:1px;background:#fff"></div>
<div class="a" style="left:387px;top:246px;width:1px;height:406px;background:#fff"></div>
<div class="a" style="left:389px;top:248px;width:398px;height:15px;background:linear-gradient(90deg,#0a246a,#a6caf0 160%)"></div>
<div class="a" style="left:390px;top:265px;width:397px;height:1px;background:#000"></div>
<div class="a" style="left:390px;top:265px;width:1px;height:387px;background:#000"></div>
<div class="a" style="left:391px;top:266px;width:396px;height:1px;background:#c0c0c0"></div>
<div class="a" style="left:391px;top:266px;width:1px;height:386px;background:#c0c0c0"></div>
<div class="a" style="left:392px;top:267px;width:395px;height:385px;background:#000"></div>
<svg class="a" style="left:0;top:0" width="787" height="652" shape-rendering="crispEdges"><rect x="392" y="267" width="1" height="385" fill="#004000"/>
<rect x="413" y="267" width="1" height="385" fill="#004000"/>
<rect x="433" y="267" width="1" height="385" fill="#004000"/>
<rect x="453" y="267" width="1" height="385" fill="#004000"/>
<rect x="473" y="267" width="1" height="385" fill="#004000"/>
<rect x="494" y="267" width="1" height="385" fill="#004000"/>
<rect x="514" y="267" width="1" height="385" fill="#004000"/>
<rect x="534" y="267" width="1" height="385" fill="#004000"/>
<rect x="554" y="267" width="1" height="385" fill="#004000"/>
<rect x="575" y="267" width="1" height="385" fill="#004000"/>
<rect x="595" y="267" width="1" height="385" fill="#004000"/>
<rect x="615" y="267" width="1" height="385" fill="#004000"/>
<rect x="635" y="267" width="1" height="385" fill="#004000"/>
<rect x="655" y="267" width="2" height="385" fill="#004000"/>
<rect x="676" y="267" width="1" height="385" fill="#004000"/>
<rect x="696" y="267" width="1" height="385" fill="#004000"/>
<rect x="716" y="267" width="1" height="385" fill="#004000"/>
<rect x="736" y="267" width="1" height="385" fill="#004000"/>
<rect x="757" y="267" width="1" height="385" fill="#004000"/>
<rect x="777" y="267" width="1" height="385" fill="#004000"/>
<rect x="392" y="267" width="395" height="1" fill="#004000"/>
<rect x="392" y="287" width="395" height="1" fill="#004000"/>
<rect x="392" y="307" width="395" height="1" fill="#004000"/>
<rect x="392" y="328" width="395" height="1" fill="#004000"/>
<rect x="392" y="348" width="395" height="1" fill="#004000"/>
<rect x="392" y="368" width="395" height="1" fill="#004000"/>
<rect x="392" y="388" width="395" height="1" fill="#004000"/>
<rect x="392" y="408" width="395" height="1" fill="#004000"/>
<rect x="392" y="428" width="395" height="1" fill="#004000"/>
<rect x="392" y="448" width="395" height="1" fill="#004000"/>
<rect x="392" y="468" width="395" height="1" fill="#004000"/>
<rect x="392" y="488" width="395" height="1" fill="#004000"/>
<rect x="392" y="508" width="395" height="1" fill="#004000"/>
<rect x="392" y="528" width="395" height="1" fill="#004000"/>
<rect x="392" y="549" width="395" height="1" fill="#004000"/>
<rect x="392" y="569" width="395" height="1" fill="#004000"/>
<rect x="392" y="589" width="395" height="1" fill="#004000"/>
<rect x="392" y="609" width="395" height="1" fill="#004000"/>
<rect x="392" y="629" width="395" height="1" fill="#004000"/>
<rect x="392" y="649" width="395" height="1" fill="#004000"/>
<rect x="595" y="267" width="1" height="3" fill="#b0b0b0"/>
<rect x="595" y="273" width="1" height="3" fill="#b0b0b0"/>
<rect x="595" y="279" width="1" height="3" fill="#b0b0b0"/>
<rect x="595" y="285" width="1" height="3" fill="#b0b0b0"/>
<rect x="595" y="291" width="1" height="3" fill="#b0b0b0"/>
<rect x="595" y="297" width="1" height="3" fill="#b0b0b0"/>
<rect x="595" y="303" width="1" height="3" fill="#b0b0b0"/>
<rect x="595" y="309" width="1" height="3" fill="#b0b0b0"/>
<rect x="595" y="315" width="1" height="3" fill="#b0b0b0"/>
<rect x="595" y="321" width="1" height="3" fill="#b0b0b0"/>
<rect x="595" y="327" width="1" height="3" fill="#b0b0b0"/>
<rect x="595" y="333" width="1" height="3" fill="#b0b0b0"/>
<rect x="595" y="339" width="1" height="3" fill="#b0b0b0"/>
<rect x="595" y="345" width="1" height="3" fill="#b0b0b0"/>
<rect x="595" y="351" width="1" height="3" fill="#b0b0b0"/>
<rect x="595" y="357" width="1" height="3" fill="#b0b0b0"/>
<rect x="595" y="363" width="1" height="3" fill="#b0b0b0"/>
<rect x="595" y="369" width="1" height="3" fill="#b0b0b0"/>
<rect x="595" y="375" width="1" height="3" fill="#b0b0b0"/>
<rect x="595" y="381" width="1" height="3" fill="#b0b0b0"/>
<rect x="595" y="387" width="1" height="3" fill="#b0b0b0"/>
<rect x="595" y="393" width="1" height="3" fill="#b0b0b0"/>
<rect x="595" y="399" width="1" height="3" fill="#b0b0b0"/>
<rect x="595" y="405" width="1" height="3" fill="#b0b0b0"/>
<rect x="595" y="411" width="1" height="3" fill="#b0b0b0"/>
<rect x="595" y="417" width="1" height="3" fill="#b0b0b0"/>
<rect x="595" y="423" width="1" height="3" fill="#b0b0b0"/>
<rect x="595" y="429" width="1" height="3" fill="#b0b0b0"/>
<rect x="595" y="435" width="1" height="3" fill="#b0b0b0"/>
<rect x="595" y="441" width="1" height="3" fill="#b0b0b0"/>
<rect x="595" y="447" width="1" height="3" fill="#b0b0b0"/>
<rect x="595" y="453" width="1" height="3" fill="#b0b0b0"/>
<rect x="595" y="459" width="1" height="3" fill="#b0b0b0"/>
<rect x="595" y="465" width="1" height="3" fill="#b0b0b0"/>
<rect x="595" y="471" width="1" height="3" fill="#b0b0b0"/>
<rect x="595" y="477" width="1" height="3" fill="#b0b0b0"/>
<rect x="595" y="483" width="1" height="3" fill="#b0b0b0"/>
<rect x="595" y="489" width="1" height="3" fill="#b0b0b0"/>
<rect x="595" y="495" width="1" height="3" fill="#b0b0b0"/>
<rect x="595" y="501" width="1" height="3" fill="#b0b0b0"/>
<rect x="595" y="507" width="1" height="3" fill="#b0b0b0"/>
<rect x="595" y="513" width="1" height="3" fill="#b0b0b0"/>
<rect x="595" y="519" width="1" height="3" fill="#b0b0b0"/>
<rect x="595" y="525" width="1" height="3" fill="#b0b0b0"/>
<rect x="595" y="531" width="1" height="3" fill="#b0b0b0"/>
<rect x="595" y="537" width="1" height="3" fill="#b0b0b0"/>
<rect x="595" y="543" width="1" height="3" fill="#b0b0b0"/>
<rect x="595" y="549" width="1" height="3" fill="#b0b0b0"/>
<rect x="595" y="555" width="1" height="3" fill="#b0b0b0"/>
<rect x="595" y="561" width="1" height="3" fill="#b0b0b0"/>
<rect x="595" y="567" width="1" height="3" fill="#b0b0b0"/>
<rect x="595" y="573" width="1" height="3" fill="#b0b0b0"/>
<rect x="595" y="579" width="1" height="3" fill="#b0b0b0"/>
<rect x="595" y="585" width="1" height="3" fill="#b0b0b0"/>
<rect x="595" y="591" width="1" height="3" fill="#b0b0b0"/>
<rect x="595" y="597" width="1" height="3" fill="#b0b0b0"/>
<rect x="595" y="603" width="1" height="3" fill="#b0b0b0"/>
<rect x="595" y="609" width="1" height="3" fill="#b0b0b0"/>
<rect x="595" y="615" width="1" height="3" fill="#b0b0b0"/>
<rect x="595" y="621" width="1" height="3" fill="#b0b0b0"/>
<rect x="595" y="627" width="1" height="3" fill="#b0b0b0"/>
<rect x="595" y="633" width="1" height="3" fill="#b0b0b0"/>
<rect x="595" y="639" width="1" height="3" fill="#b0b0b0"/>
<rect x="595" y="645" width="1" height="3" fill="#b0b0b0"/>
<rect x="595" y="651" width="1" height="3" fill="#b0b0b0"/>
<polyline fill="none" stroke="#ffff00" stroke-width="1" points="392.5,348.5 592.5,348.5 592.5,366.5 595.5,366.5 595.5,348.5 597.5,348.5 597.5,366.5 603.5,366.5 603.5,348.5 607.5,348.5 607.5,366.5 611.5,366.5 611.5,348.5 787.5,348.5"/><rect x="392" y="348" width="201" height="1" fill="#ffff00"/><rect x="595" y="348" width="3" height="1" fill="#ffff00"/><rect x="603" y="348" width="5" height="1" fill="#ffff00"/><rect x="611" y="348" width="177" height="1" fill="#ffff00"/>
<polyline fill="none" stroke="#10a0f0" stroke-width="1" points="392.5,428.5 592.5,428.5 592.5,420.5 595.5,420.5 595.5,428.5 597.5,428.5 597.5,420.5 603.5,420.5 603.5,428.5 607.5,428.5 607.5,420.5 611.5,420.5 611.5,428.5 787.5,428.5"/><rect x="392" y="428" width="201" height="1" fill="#10e0f0"/><rect x="595" y="428" width="3" height="1" fill="#10e0f0"/><rect x="603" y="428" width="5" height="1" fill="#10e0f0"/><rect x="611" y="428" width="177" height="1" fill="#10e0f0"/>
<polyline fill="none" stroke="#e8208a" stroke-width="1" points="392.5,488.5 592.5,488.5 592.5,508.5 595.5,508.5 595.5,488.5 597.5,488.5 597.5,508.5 603.5,508.5 603.5,488.5 607.5,488.5 607.5,508.5 611.5,508.5 611.5,488.5 787.5,488.5"/><rect x="392" y="488" width="201" height="1" fill="#e8608a"/><rect x="592" y="508" width="4" height="1" fill="#e8608a"/><rect x="595" y="488" width="3" height="1" fill="#e8608a"/><rect x="597" y="508" width="7" height="1" fill="#e8608a"/><rect x="603" y="488" width="5" height="1" fill="#e8608a"/><rect x="607" y="508" width="5" height="1" fill="#e8608a"/><rect x="611" y="488" width="177" height="1" fill="#e8608a"/>
<rect x="392" y="589" width="395" height="1" fill="#00c040"/>
<text x="393" y="11" font-size="11.5" font-weight="bold" fill="#d4d0c8" stroke="#d4d0c8" stroke-width="0.45" textLength="91" lengthAdjust="spacing">Virtual Terminal</text>
<text x="391" y="260" font-size="11.5" font-weight="bold" fill="#ffffff" stroke="#ffffff" stroke-width="0.45" textLength="109" lengthAdjust="spacing">Digital Oscilloscope</text>
<rect x="398" y="20" width="1" height="9" fill="#00ff00"/><rect x="397" y="21" width="1" height="1" fill="#00ff00"/><rect x="396" y="22" width="1" height="1" fill="#00ff00"/><rect x="396" y="28" width="5" height="1" fill="#00ff00"/>
</svg>
</body></html>
